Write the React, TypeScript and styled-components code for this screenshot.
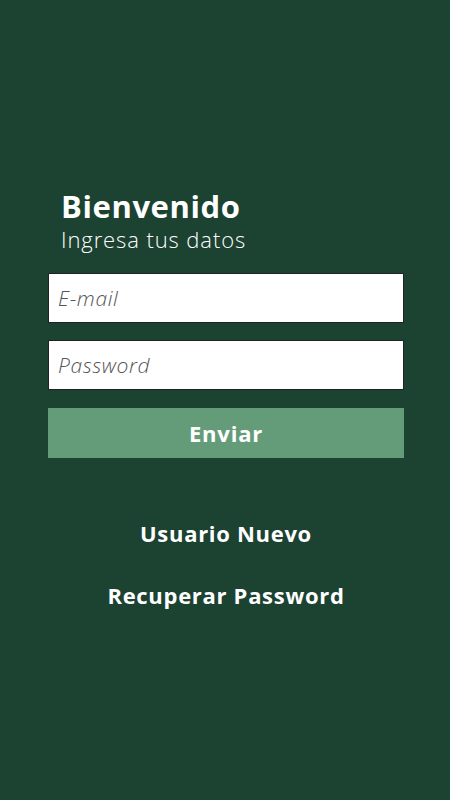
import styled, { createGlobalStyle } from "styled-components"

const Global = createGlobalStyle`
body {
  margin: 0;
  background-color: #1c4232;
  font-family: "Open Sans", "DejaVu Sans", sans-serif;
}
`

const Page = styled.div`
display: flex;
flex-direction: column;
align-items: center;
width: 450px;
height: 800px;
padding-top: 186px;
padding-left: 2px;
box-sizing: border-box;
background-color: #1c4232;
`

const Header = styled.div`
width: 343px;
padding-left: 13px;
margin-bottom: 21px;
color: white;
`

const Title = styled.h1`
margin: 0;
font-size: 31px;
font-weight: 700;
letter-spacing: 0.6px;
line-height: 40px;
`

const Subtitle = styled.p`
margin: 0;
font-size: 22px;
font-weight: 300;
letter-spacing: 0.9px;
line-height: 26px;
`

const Form = styled.form`
display: flex;
flex-direction: column;
width: 356px;
`

const Input = styled.input`
height: 50px;
box-sizing: border-box;
border: 1px solid #222;
outline: none;
padding-left: 9px;
margin-bottom: 17px;
font-family: "Open Sans", sans-serif;
font-size: 21px;
font-style: italic;
font-weight: 300;
letter-spacing: 0.6px;
&::placeholder {
  color: #555;
}
`

const Button = styled.button`
height: 50px;
border: none;
margin-top: 1px;
background-color: #649c7a;
color: white;
font-family: "Open Sans", sans-serif;
font-size: 22px;
font-weight: 700;
letter-spacing: 0.8px;
cursor: pointer;
`

const Links = styled.div`
display: flex;
flex-direction: column;
align-items: center;
gap: 36px;
margin-top: 62px;
`

const LinkText = styled.a`
color: white;
font-size: 22px;
font-weight: 700;
letter-spacing: 0.7px;
line-height: 26px;
text-decoration: none;
cursor: pointer;
`

const App = () => {
    return (
        <>
            <Global />
            <Page>
                <Header>
                    <Title>Bienvenido</Title>
                    <Subtitle>Ingresa tus datos</Subtitle>
                </Header>
                <Form onSubmit={(e) => e.preventDefault()}>
                    <Input type="email" placeholder="E-mail" />
                    <Input type="password" placeholder="Password" />
                    <Button type="submit">Enviar</Button>
                </Form>
                <Links>
                    <LinkText>Usuario Nuevo</LinkText>
                    <LinkText>Recuperar Password</LinkText>
                </Links>
            </Page>
        </>
    )
}

export default App
